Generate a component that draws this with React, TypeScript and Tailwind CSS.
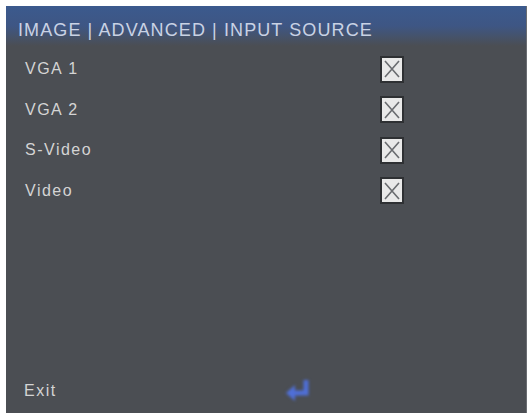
import React from 'react';

const sources = ['VGA 1', 'VGA 2', 'S-Video', 'Video'];

const CrossBox: React.FC = () => (
  <div className="w-[24px] h-[27px] bg-[#e9e9e9] border-2 border-[#2e3033] flex items-center justify-center">
    <svg width="18" height="20" viewBox="0 0 18 20">
      <path d="M2 2 L16 18 M16 2 L2 18" stroke="#6a6c70" strokeWidth="1.6" fill="none" />
    </svg>
  </div>
);

const EnterIcon: React.FC = () => (
  <svg width="32" height="30" viewBox="0 0 32 30" className="blur-[1.5px]">
    <path d="M24 4 L24 17 L11 17" stroke="#4f6fd8" strokeWidth="5" fill="none" />
    <path d="M4 17 L13 9 L13 25 Z" fill="#4f6fd8" />
  </svg>
);

export default function App() {
  return (
    <div className="w-[531px] h-[414px] bg-white pt-[6px] pl-[6px]" style={{ fontFamily: '"Liberation Sans", Arial, sans-serif' }}>
      <div className="w-[521px] h-[407px] bg-[#4b4e53] flex flex-col border-r border-[#6a6d72]">
        <div className="h-[40px] bg-gradient-to-b from-[#3b5a8e] via-[#3e5684] to-[#4b4e53] pl-[12px] pt-[13px]">
          <span className="text-[18px] leading-none text-[#c9d2e4] tracking-[1.1px]">
            IMAGE | ADVANCED | INPUT SOURCE
          </span>
        </div>
        <div className="flex flex-col pt-[3px]">
          {sources.map((name) => (
            <div key={name} className="h-[40.5px] flex items-center">
              <span className="w-[374px] pl-[19px] text-[16px] tracking-[1.5px] text-[#d4d4d4]">{name}</span>
              <CrossBox />
            </div>
          ))}
        </div>
        <div className="mt-auto h-[44px] flex items-center">
          <span className="w-[276px] pl-[18px] text-[16px] tracking-[1.5px] text-[#d4d4d4]">Exit</span>
          <EnterIcon />
        </div>
      </div>
    </div>
  );
}
